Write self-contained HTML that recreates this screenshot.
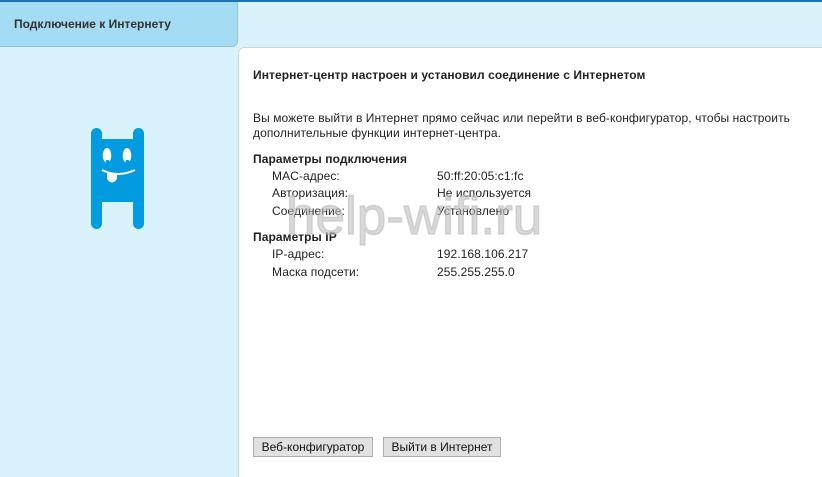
<!DOCTYPE html>
<html><head><meta charset="utf-8"><style>
*{margin:0;padding:0;box-sizing:border-box}
body{width:822px;height:469px;overflow:hidden;background:#d9f2fc;font-family:"Liberation Sans",Arial,sans-serif;font-size:12px;color:#222;position:relative}
.topline{position:absolute;left:0;top:0;width:822px;height:2px;background:#1b73b3}
.tab{position:absolute;left:0;top:2px;width:238px;height:45px;background:#a4dcf4;border-bottom-right-radius:6px;border-right:1px solid #8fc6de;border-bottom:1px solid #8fc6de}
.tab span{position:absolute;left:14px;top:15px;font-weight:bold;font-size:12px;color:#333}
.panel{position:absolute;left:238px;top:47px;width:600px;height:430px;background:#fff;border-top-left-radius:6px;border-left:1px solid #c8d8e0;border-top:1px solid #c8d8e0}
.t{position:absolute;white-space:nowrap;letter-spacing:0.08px}
.b{font-weight:bold}
.btn{position:absolute;top:437px;height:20px;background:#e1e1e1;border:1px solid #adadad;font-size:12px;text-align:center;line-height:18px;color:#111}
.wm{position:absolute;left:286px;top:186px;font-size:53px;color:rgba(185,185,185,0.55);font-weight:normal;-webkit-text-stroke:1.5px rgba(185,185,185,0.55)}
</style></head><body>
<div class="topline"></div>
<div class="tab"><span>Подключение к Интернету</span></div>
<svg style="position:absolute;left:88px;top:125px" width="60" height="108">
<rect x="3" y="3" width="11" height="101" rx="5.5" fill="#039be0"/>
<rect x="45" y="3" width="11" height="101" rx="5.5" fill="#039be0"/>
<rect x="3" y="14" width="53" height="63" fill="#039be0"/>
<ellipse cx="19" cy="30.5" rx="4.3" ry="7.5" fill="#fff"/>
<ellipse cx="39" cy="30.5" rx="4.3" ry="7.5" fill="#fff"/>
<ellipse cx="19.5" cy="36.5" rx="2" ry="1.6" fill="#039be0"/>
<ellipse cx="39.5" cy="36.5" rx="2" ry="1.6" fill="#039be0"/>
<path d="M14 45 Q30 53 47 45" stroke="#fff" stroke-width="2" fill="none"/>
<path d="M19 48 L19 54 Q24 61 29 54 L29 48 Q24 50 19 48 Z" fill="#fff"/>
</svg>
<div class="panel"></div>
<div class="t b" style="left:253px;top:68px">Интернет-центр настроен и установил соединение с Интернетом</div>
<div class="t" style="left:253px;top:111px;line-height:15px">Вы можете выйти в Интернет прямо сейчас или перейти в веб-конфигуратор, чтобы настроить<br>дополнительные функции интернет-центра.</div>
<div class="t b" style="left:253px;top:152px">Параметры подключения</div>
<div class="t" style="left:272px;top:169px">MAC-адрес:</div><div class="t" style="left:437px;top:169px">50:ff:20:05:c1:fc</div>
<div class="t" style="left:272px;top:186px">Авторизация:</div><div class="t" style="left:437px;top:186px">Не используется</div>
<div class="t" style="left:272px;top:204px">Соединение:</div><div class="t" style="left:437px;top:204px">Установлено</div>
<div class="t b" style="left:253px;top:230px">Параметры IP</div>
<div class="t" style="left:272px;top:247px">IP-адрес:</div><div class="t" style="left:437px;top:247px">192.168.106.217</div>
<div class="t" style="left:272px;top:265px">Маска подсети:</div><div class="t" style="left:437px;top:265px">255.255.255.0</div>
<div class="wm">help-wifi.ru</div>
<div class="btn" style="left:253px;width:120px">Веб-конфигуратор</div>
<div class="btn" style="left:383px;width:118px">Выйти в Интернет</div>
</body></html>
